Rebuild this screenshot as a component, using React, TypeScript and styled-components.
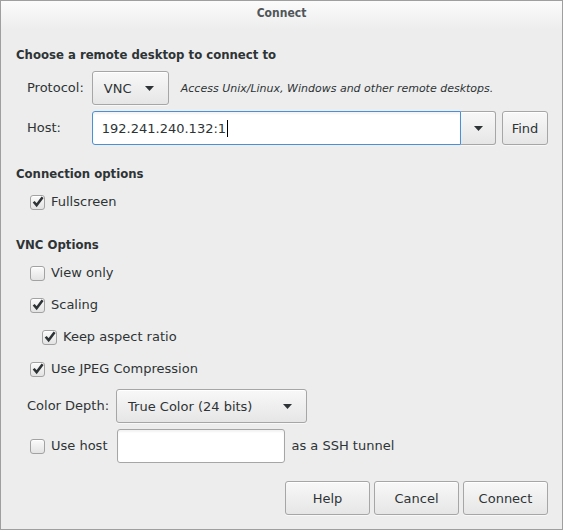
import React from "react";
import styled, { createGlobalStyle } from "styled-components";

const Global = createGlobalStyle`
  html, body { margin: 0; padding: 0; background: #ededed; }
  * { box-sizing: border-box; }
`;

const Window = styled.div`
  width: 563px;
  height: 530px;
  border: 1px solid #9f9f9f;
  background: #ededed;
  font-family: "DejaVu Sans", sans-serif;
  font-size: 13px;
  color: #2e3436;
  display: flex;
  flex-direction: column;
`;

const TitleBar = styled.div`
  height: 29px;
  flex: none;
  background: linear-gradient(#fbfbfb, #ededed);
  display: flex;
  justify-content: center;
  padding-top: 4px;
  line-height: 16px;
  font-family: "DejaVu Sans Condensed", "DejaVu Sans", sans-serif;
  font-stretch: condensed;
  font-weight: bold;
  font-size: 12px;
  color: #505659;
`;

const Content = styled.div`
  padding: 0 14px 0 15px;
  display: flex;
  flex-direction: column;
`;

const Heading = styled.div<{ $top: number }>`
  font-family: "DejaVu Sans Condensed", "DejaVu Sans", sans-serif;
  font-stretch: condensed;
  font-weight: bold;
  line-height: 16px;
  margin-top: ${(p) => p.$top}px;
`;

const FormGrid = styled.div`
  display: grid;
  grid-template-columns: auto 1fr;
  column-gap: 8px;
  row-gap: 6px;
  margin-top: 8px;
  padding-left: 11px;
  align-items: center;
`;

const Label = styled.span`
  line-height: 16px;
  white-space: nowrap;
`;

const Row = styled.div<{ $top?: number; $indent?: number; $gap?: number }>`
  display: flex;
  align-items: center;
  gap: ${(p) => p.$gap ?? 8}px;
  margin-top: ${(p) => p.$top ?? 0}px;
  padding-left: ${(p) => p.$indent ?? 0}px;
`;

const Button = styled.button<{ $w?: number }>`
  font-family: inherit;
  font-size: 13px;
  color: #2e3436;
  height: 34px;
  width: ${(p) => (p.$w ? `${p.$w}px` : "auto")};
  padding: 0 10px;
  border: 1px solid #a6a6a6;
  border-radius: 3px;
  background: linear-gradient(#f8f8f8, #e6e6e6);
  box-shadow: inset 0 1px #ffffff, 0 1px rgba(255,255,255,0.6);
  display: flex;
  align-items: center;
  justify-content: center;
  flex: none;
`;

const ComboButton = styled(Button)`
  justify-content: space-between;
  padding: 0 14px 0 11px;
`;

const Arrow = () => (
  <svg width="9" height="5" viewBox="0 0 9 5">
    <path d="M0 0 L9 0 L4.5 5 Z" fill="#2e3436" />
  </svg>
);

const Hint = styled.span`
  font-style: italic;
  font-size: 11px;
  margin-left: 4px;
  white-space: nowrap;
`;

const HostGroup = styled.div`
  display: flex;
  align-items: center;
  gap: 6px;
`;

const EntryCombo = styled.div`
  display: flex;
  flex: 1;
  height: 34px;
`;

const Entry = styled.div<{ $focused?: boolean; $w?: number; $joined?: boolean; $ml?: number }>`
  height: 34px;
  ${(p) => (p.$w ? `width: ${p.$w}px;` : "flex: 1;")}
  margin-left: ${(p) => p.$ml ?? 0}px;
  background: #ffffff;
  border: 1px solid ${(p) => (p.$focused ? "#4a90d9" : "#a6a6a6")};
  border-radius: ${(p) => (p.$joined ? "3px 0 0 3px" : "3px")};
  box-shadow: inset 0 2px 2px rgba(0,0,0,0.05);
  display: flex;
  align-items: center;
  padding-left: 9px;
  font-size: 13px;
`;

const Caret = styled.span`
  display: inline-block;
  width: 1px;
  height: 17px;
  background: #000;
  margin-left: 1px;
`;

const EntryDrop = styled(Button)`
  width: 35px;
  border-left: none;
  border-radius: 0 3px 3px 0;
  padding: 0;
`;

const CheckRow = styled.div<{ $top: number; $indent?: number }>`
  display: flex;
  align-items: center;
  height: 22px;
  gap: 6px;
  margin-top: ${(p) => p.$top}px;
  padding-left: ${(p) => p.$indent ?? 14}px;
`;

const Box = styled.span`
  width: 15px;
  height: 15px;
  border: 1px solid #a2a2a2;
  border-radius: 3px;
  background: linear-gradient(#fbfbfb, #e3e3e3);
  box-shadow: inset 0 1px #fff;
  display: flex;
  align-items: center;
  justify-content: center;
  flex: none;
`;

const Check = ({ checked }: { checked?: boolean }) => (
  <Box>
    {checked && (
      <svg width="13" height="13" viewBox="0 0 13 13" style={{ marginTop: -1, marginLeft: 1 }}>
        <path d="M1.8 6.8 L5 10.5 L11.5 1.8" stroke="#2e3436" strokeWidth="2.8" fill="none" strokeLinecap="butt" strokeLinejoin="miter" />
      </svg>
    )}
  </Box>
);

const Footer = styled.div`
  display: flex;
  justify-content: flex-end;
  gap: 4px;
  margin-top: 18px;
`;

export default function App() {
  return (
    <>
      <Global />
      <Window>
        <TitleBar>Connect</TitleBar>
        <Content>
          <Heading $top={17}>Choose a remote desktop to connect to</Heading>
          <FormGrid>
            <Label>Protocol:</Label>
            <Row>
              <ComboButton $w={77}>
                <span>VNC</span>
                <Arrow />
              </ComboButton>
              <Hint>Access Unix/Linux, Windows and other remote desktops.</Hint>
            </Row>
            <Label>Host:</Label>
            <HostGroup>
              <EntryCombo>
                <Entry $focused $joined>
                  192.241.240.132:1<Caret />
                </Entry>
                <EntryDrop>
                  <Arrow />
                </EntryDrop>
              </EntryCombo>
              <Button $w={46}>Find</Button>
            </HostGroup>
          </FormGrid>

          <Heading $top={21}>Connection options</Heading>
          <CheckRow $top={9}>
            <Check checked />
            <Label>Fullscreen</Label>
          </CheckRow>

          <Heading $top={24}>VNC Options</Heading>
          <CheckRow $top={9}>
            <Check />
            <Label>View only</Label>
          </CheckRow>
          <CheckRow $top={10}>
            <Check checked />
            <Label>Scaling</Label>
          </CheckRow>
          <CheckRow $top={10} $indent={26}>
            <Check checked />
            <Label>Keep aspect ratio</Label>
          </CheckRow>
          <CheckRow $top={10}>
            <Check checked />
            <Label>Use JPEG Compression</Label>
          </CheckRow>

          <Row $top={9} $indent={11} $gap={7}>
            <Label>Color Depth:</Label>
            <ComboButton $w={191}>
              <span>True Color (24 bits)</span>
              <Arrow />
            </ComboButton>
          </Row>
          <Row $top={6} $indent={14} $gap={6}>
            <Check />
            <Label>Use host</Label>
            <Entry $w={168} $ml={4} />
            <Label>as a SSH tunnel</Label>
          </Row>

          <Footer>
            <Button $w={85}>Help</Button>
            <Button $w={85}>Cancel</Button>
            <Button $w={85}>Connect</Button>
          </Footer>
        </Content>
      </Window>
    </>
  );
}
